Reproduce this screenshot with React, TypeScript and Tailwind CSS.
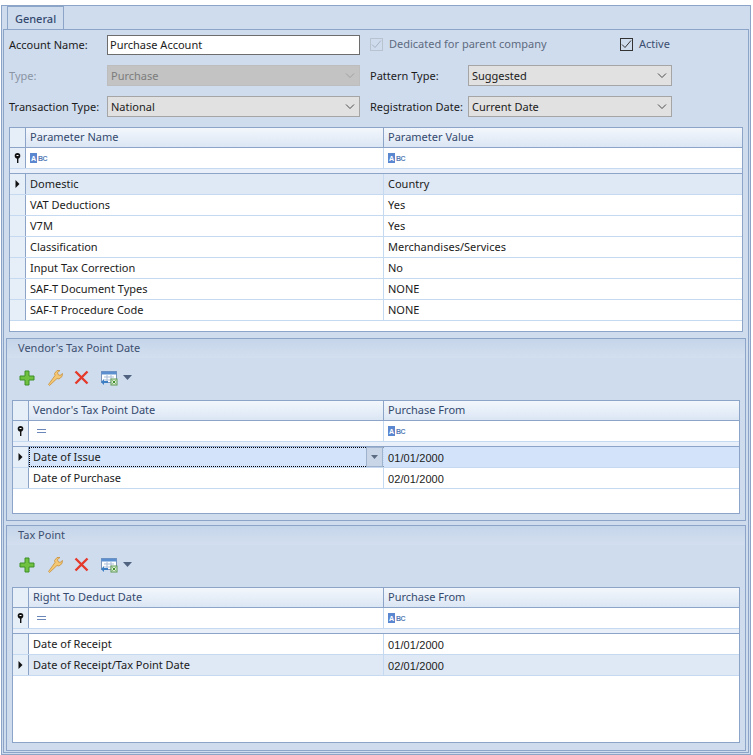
import React from 'react';

const line = 'border-[#8ba4c8]';

function AbcIcon() {
  return (
    <span className="flex items-center gap-[1px] font-['Liberation_Sans',sans-serif] font-bold leading-none">
      <span className="flex h-[10px] w-[7px] items-center justify-center bg-[#5b87d0] text-[7px] text-white">A</span>
      <span className="text-[7px] tracking-[-0.5px] text-[#5b7fb8]">BC</span>
    </span>
  );
}

function EqIcon() {
  return (
    <span className="ml-[4px] flex w-[9px] flex-col gap-[2px]">
      <span className="h-px bg-[#6b86b8]" />
      <span className="h-px bg-[#6b86b8]" />
    </span>
  );
}

function KeyIcon() {
  return (
    <svg width="7" height="10" viewBox="0 0 7 10">
      <circle cx="3.500" cy="2.800" r="2.800" fill="#111" />
      <rect x="2.500" y="2" width="2" height="1" fill="#fff" />
      <rect x="3" y="5" width="1.400" height="5" fill="#111" />
    </svg>
  );
}

function RowArrow() {
  return (
    <svg width="5" height="8" viewBox="0 0 5 8">
      <path d="M0.500 0v8l4-4z" fill="#111" />
    </svg>
  );
}

function Chevron({ color = '#4a4a4a' }: { color?: string }) {
  return (
    <svg width="10" height="6" viewBox="0 0 10 6" fill="none">
      <path d="M1 0.500l4 4 4-4" stroke={color} />
    </svg>
  );
}

function Check({ color }: { color: string }) {
  return (
    <svg width="11" height="9" viewBox="0 0 11 9" fill="none">
      <path d="M1 4.500l3 3 6-7" stroke={color} />
    </svg>
  );
}

function Select({ value, width, disabled }: { value: string; width: string; disabled?: boolean }) {
  return (
    <div
      className={`flex h-[21px] shrink-0 items-center justify-between border pl-[3px] pr-[4px] ${width} ${
        disabled ? 'border-[#bdbdbd] bg-[#c3c3c3] text-[#7c7c7c]' : 'border-[#a5a5a5] bg-[#e1e1e1] text-[#1b1b1b]'
      }`}
    >
      <span>{value}</span>
      <Chevron color={disabled ? '#a0a0a0' : '#4a4a4a'} />
    </div>
  );
}

type Row = { a: string; b: string; active?: 'soft' | 'strong'; combo?: boolean };

function DataGrid({
  heads,
  rows,
  filterIcon,
  colWidth,
  height,
}: {
  heads: [string, string];
  rows: Row[];
  filterIcon: React.ReactNode;
  colWidth: string;
  height: string;
}) {
  const inset = 'w-[16px]';
  return (
    <div className={`flex flex-col border border-[#8ba4c8] bg-white text-[#1b1b1b] ${height}`}>
      <div className="flex h-[20px] border-b border-[#8ba4c8] bg-gradient-to-b from-[#f3f7fc] to-[#dbe6f4] text-[#34496e]">
        <div className={`shrink-0 border-r border-[#8ba4c8] bg-[#e6eef8] ${inset}`} />
        <div className="flex flex-1 items-center border-r border-[#8ba4c8] pb-[2px] pl-[4px]">{heads[0]}</div>
        <div className={`flex items-center pb-[2px] pl-[4px] ${colWidth}`}>{heads[1]}</div>
      </div>
      <div className="flex h-[21px] border-b border-[#c5d9f1]">
        <div className={`flex shrink-0 items-center justify-center border-r border-[#8ba4c8] bg-[#e6eef8] ${inset}`}>
          <KeyIcon />
        </div>
        <div className="flex flex-1 items-center border-r border-[#c5d9f1] pl-[4px]">{filterIcon}</div>
        <div className={`flex items-center pl-[4px] ${colWidth}`}>
          <AbcIcon />
        </div>
      </div>
      <div className="h-[5px] border-b border-[#8ba4c8] bg-[#e9f0f9]" />
      {rows.map((r) => (
        <div
          key={r.a}
          className={`flex h-[21px] border-b border-[#c5d9f1] ${
            r.active === 'strong' ? 'bg-[#d3e4fa]' : r.active === 'soft' ? 'bg-[#dfe9f5]' : 'bg-white'
          }`}
        >
          <div className={`flex shrink-0 items-center justify-center border-r border-[#8ba4c8] bg-[#e6eef8] ${inset}`}>
            {r.active ? <RowArrow /> : null}
          </div>
          <div
            className={`flex flex-1 items-center justify-between border-r border-[#c5d9f1] ${
              r.combo ? 'border-y border-l border-dotted border-y-black border-l-black pl-[3px]' : 'pl-[4px]'
            }`}
          >
            <span className="pb-[2px]">{r.a}</span>
            {r.combo ? (
              <span className="flex h-[20px] w-[17px] items-center justify-center border border-[#9fb3cf] bg-[#c9d6e8]">
                <svg width="7" height="4" viewBox="0 0 7 4">
                  <path d="M0 0h7l-3.500 4z" fill="#5b6b82" />
                </svg>
              </span>
            ) : null}
          </div>
          {r.b.includes('/2') ? (
            <div className={`flex items-center pl-[4px] pt-[2px] font-['Liberation_Sans',sans-serif] text-[11px] tracking-[0.1px] ${colWidth}`}>{r.b}</div>
          ) : (
            <div className={`flex items-center pb-[2px] pl-[4px] ${colWidth}`}>{r.b}</div>
          )}
        </div>
      ))}
    </div>
  );
}

function Toolbar() {
  return (
    <div className="flex h-[42px] items-center pb-[3px] pl-[12px]">
      <svg width="16" height="16" viewBox="0 0 16 16" className="mr-[12px]">
        <path d="M6 1h4v5h5v4h-5v5H6v-5H1V6h5z" fill="#6fc13f" stroke="#3f8f2a" />
      </svg>
      <svg width="16" height="16" viewBox="0 0 16 16" className="mr-[11px]">
        <path
          d="M1.500 14.500l1 1 7.500-7 2 .5 3-2.500.5-3-2.500 2-2-1 -.5-2 2.500-2h-3l-2.500 3 .5 2z"
          fill="#f3c774"
          stroke="#c8913c"
          strokeWidth="0.8"
        />
      </svg>
      <svg width="15" height="15" viewBox="0 0 15 15" className="mr-[11px]">
        <path d="M1.500 1.500l12 12M13.500 1.500l-12 12" stroke="#e5392b" strokeWidth="2.400" />
      </svg>
      <svg width="18" height="16" viewBox="0 0 18 16" className="mr-[5px]">
        <rect x="1.500" y="1.500" width="15" height="11" fill="#fff" stroke="#7c94b8" />
        <rect x="1.500" y="1.500" width="15" height="3" fill="#5c8fd0" />
        <path d="M4 7h10M4 10h10M7 5v7M11 5v7" stroke="#a9bcd6" />
        <path d="M1 12l3-3v2h4v2H4v2z" fill="#3c7fc4" />
        <rect x="11" y="9" width="6" height="6" fill="#d8ead2" stroke="#5f9a53" />
        <path d="M12.500 10.500l3 3M15.500 10.500l-3 3" stroke="#3f8f2a" />
      </svg>
      <svg width="9" height="5" viewBox="0 0 9 5">
        <path d="M0 0h9l-4.500 5z" fill="#4f6280" />
      </svg>
    </div>
  );
}

function GroupBox({ title, className, children }: { title: string; className: string; children: React.ReactNode }) {
  return (
    <section className={`flex flex-col border ${line} bg-[#cfdcee] ${className}`}>
      <div className="flex h-[19px] items-center bg-gradient-to-b from-[#c5d5ea] to-[#d3dfef] pb-[2px] pl-[11px] text-[#3c4f70]">
        {title}
      </div>
      <Toolbar />
      <div className="px-[5px]">{children}</div>
    </section>
  );
}

const params: Row[] = [
  { a: 'Domestic', b: 'Country', active: 'soft' },
  { a: 'VAT Deductions', b: 'Yes' },
  { a: 'V7M', b: 'Yes' },
  { a: 'Classification', b: 'Merchandises/Services' },
  { a: 'Input Tax Correction', b: 'No' },
  { a: 'SAF-T Document Types', b: 'NONE' },
  { a: 'SAF-T Procedure Code', b: 'NONE' },
];

export default function App() {
  return (
    <div className="h-[755px] w-[753px] bg-white pl-px pt-[5px] font-['Noto_Sans',sans-serif] text-[11px] leading-none text-[#1b1b1b]">
      <div className={`flex h-[750px] w-[750px] flex-col border ${line} bg-[#cfdcee] px-px pb-px`}>
        <div className="flex h-[23px] shrink-0 items-end pl-[4px]">
          <div className={`flex h-[23px] w-[57px] items-center justify-center border border-b-0 ${line} font-medium text-[#34496e]`}>
            General
          </div>
        </div>
        <div className={`flex min-h-0 flex-1 flex-col border ${line} px-[2px] pb-[1px]`}>
          <div className="px-[3px]">
            <div className="mt-[5px] flex h-[20px] items-center">
              <span className="w-[98px] pb-[2px]">Account Name:</span>
              <div className="flex h-[20px] w-[253px] items-center border border-[#6d6d6d] bg-white pb-[2px] pl-[2px]">Purchase Account</div>
              <span className="mb-[2px] ml-[10px] flex h-[13px] w-[13px] items-center justify-center border border-[#b9c2cf]">
                <Check color="#a9b4c2" />
              </span>
              <span className="ml-[6px] w-[231px] pb-[4px] text-[#5d6a7e]">Dedicated for parent company</span>
              <span className="mb-[2px] flex h-[13px] w-[13px] items-center justify-center border border-[#333]">
                <Check color="#333" />
              </span>
              <span className="ml-[6px] pb-[4px] text-[#3c4f70]">Active</span>
            </div>
            <div className="mt-[10px] flex h-[21px] items-center">
              <span className="w-[98px] text-[#8a94a3]">Type:</span>
              <Select value="Purchase" width="w-[253px]" disabled />
              <span className="ml-[10px] w-[98px]">Pattern Type:</span>
              <Select value="Suggested" width="w-[204px]" />
            </div>
            <div className="mt-[10px] flex h-[21px] items-center">
              <span className="w-[98px]">Transaction Type:</span>
              <Select value="National" width="w-[253px]" />
              <span className="ml-[10px] w-[98px]">Registration Date:</span>
              <Select value="Current Date" width="w-[204px]" />
            </div>
            <div className="mt-[10px]">
              <DataGrid
                heads={['Parameter Name', 'Parameter Value']}
                rows={params}
                filterIcon={<AbcIcon />}
                colWidth="w-[358px]"
                height="h-[205px]"
              />
            </div>
          </div>
          <GroupBox title="Vendor's Tax Point Date" className="mt-[6px] h-[183px] shrink-0">
            <DataGrid
              heads={["Vendor's Tax Point Date", 'Purchase From']}
              rows={[
                { a: 'Date of Issue', b: '01/01/2000', active: 'strong', combo: true },
                { a: 'Date of Purchase', b: '02/01/2000' },
              ]}
              filterIcon={<EqIcon />}
              colWidth="w-[355px]"
              height="h-[114px]"
            />
          </GroupBox>
          <GroupBox title="Tax Point" className="mt-[4px] min-h-0 flex-1">
            <DataGrid
              heads={['Right To Deduct Date', 'Purchase From']}
              rows={[
                { a: 'Date of Receipt', b: '01/01/2000' },
                { a: 'Date of Receipt/Tax Point Date', b: '02/01/2000', active: 'soft' },
              ]}
              filterIcon={<EqIcon />}
              colWidth="w-[355px]"
              height="h-[156px]"
            />
          </GroupBox>
        </div>
      </div>
    </div>
  );
}
